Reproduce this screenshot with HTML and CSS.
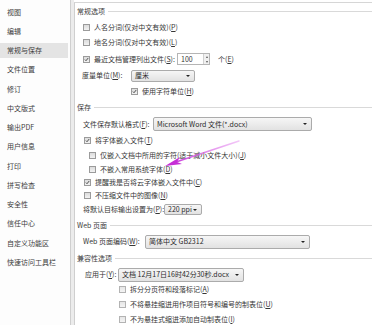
FILE: index.html
```html
<!DOCTYPE html>
<html lang="zh-CN">
<head>
<meta charset="utf-8">
<title>选项</title>
<link rel="stylesheet" href="styles.css">
</head>
<body>
<div class="page">
  <ul class="nav">
    <li>视图</li>
    <li>编辑</li>
    <li class="sel">常规与保存</li>
    <li>文件位置</li>
    <li>修订</li>
    <li>中文版式</li>
    <li>输出PDF</li>
    <li>用户信息</li>
    <li>打印</li>
    <li>拼写检查</li>
    <li>安全性</li>
    <li>信任中心</li>
    <li>自定义功能区</li>
    <li>快速访问工具栏</li>
  </ul>
  <div class="gutter"></div>
  <div class="content">
    <div class="grp g1"><span>常规选项</span><i class="rule"></i></div>
    <div class="row h15 p8"><span class="cb"></span><span>人名分词(仅对中文有效)(<u>P</u>)</span></div>
    <div class="row h16 p8"><span class="cb"></span><span>地名分词(仅对中文有效)(<u>L</u>)</span></div>
    <div class="row h17 p8"><span class="cb on"><svg viewBox="0 0 7 7"><path d="M1.3 3.6 L2.8 5.2 L5.8 1.5" /></svg></span><span class="w-recent">最近文档管理列出文件(<u>S</u>):</span>
      <span class="spin"><span class="spin-val">100</span><span class="spin-btn"><b class="up"></b><b class="dn"></b></span></span><span class="unit">个(<u>E</u>)</span></div>
    <div class="row h16 p7"><span class="w-measure">度量单位(<u>M</u>):</span><span class="sel-box s-cm"><span class="sel-text">厘米</span><b class="tri"></b></span></div>
    <div class="row h16 p57"><span class="cb on"><svg viewBox="0 0 7 7"><path d="M1.3 3.6 L2.8 5.2 L5.8 1.5" /></svg></span><span>使用字符单位(<u>H</u>)</span></div>

    <div class="grp g2"><span>保存</span><i class="rule"></i></div>
    <div class="row h17 p8"><span class="w-format">文件保存默认格式(<u>F</u>):</span><span class="sel-box s-fmt"><span class="sel-text">Microsoft Word 文件(*.docx)</span><b class="tri"></b></span></div>
    <div class="row h16 p9"><span class="cb on"><svg viewBox="0 0 7 7"><path d="M1.3 3.6 L2.8 5.2 L5.8 1.5" /></svg></span><span>将字体嵌入文件(<u>T</u>)</span></div>
    <div class="row h14 p14"><span class="cb"></span><span>仅嵌入文档中所用的字符(适于减小文件大小)(<u>J</u>)</span></div>
    <div class="row h14 p14"><span class="cb"></span><span>不嵌入常用系统字体(<u>D</u>)</span></div>
    <div class="row h13 p9"><span class="cb on"><svg viewBox="0 0 7 7"><path d="M1.3 3.6 L2.8 5.2 L5.8 1.5" /></svg></span><span>提醒我是否将云字体嵌入文件中(<u>C</u>)</span></div>
    <div class="row h13 p9"><span class="cb"></span><span>不压缩文件中的图像(<u>N</u>)</span></div>
    <div class="row h15 p8"><span class="w-ppi">将默认目标输出设置为(<u>P</u>):</span><span class="sel-box s-ppi"><span class="sel-text">220 ppi</span><b class="tri"></b></span></div>

    <div class="grp g3"><span>Web 页面</span><i class="rule"></i></div>
    <div class="row h15 p8"><span class="w-web">Web 页面编码(<u>W</u>):</span><span class="sel-box s-web"><span class="sel-text">简体中文 GB2312</span><b class="tri"></b></span></div>

    <div class="grp g4"><span>兼容性选项</span><i class="rule"></i></div>
    <div class="row h15 p10"><span class="w-apply">应用于(<u>Y</u>):</span><span class="sel-box s-doc"><span class="sel-text">文档 12月17日16时42分30秒.docx</span><b class="tri"></b></span></div>
    <div class="row h15 p44"><span class="cb dim"></span><span>拆分分页符和段落标记(<u>A</u>)</span></div>
    <div class="row h15 p44"><span class="cb dim"></span><span>不将悬挂缩进用作项目符号和编号的制表位(<u>U</u>)</span></div>
    <div class="row h15 p44"><span class="cb dim"></span><span>不为悬挂式缩进添加自动制表位(<u>I</u>)</span></div>
  </div>
  <svg class="arrow" width="372" height="325" viewBox="0 0 372 325">
    <defs>
      <linearGradient id="ag" x1="238" y1="142" x2="170" y2="164" gradientUnits="userSpaceOnUse">
        <stop offset="0" stop-color="#e58cf0" stop-opacity="0.5"/>
        <stop offset="1" stop-color="#c62fd8"/>
      </linearGradient>
    </defs>
    <path d="M239 141 L176 162" stroke="url(#ag)" stroke-width="1.4" fill="none" stroke-linecap="round"/>
    <path d="M165 166 L180 157 L177 162 L182 164 Z" fill="#c52ed6"/>
  </svg>
</div>
</body>
</html>
```

FILE: styles.css
```css
* { box-sizing: border-box; }
html, body { margin: 0; padding: 0; }
body {
  width: 372px;
  height: 325px;
  overflow: hidden;
  background: #ffffff;
  font-family: "Noto Sans CJK SC", "Noto Sans", sans-serif;
  font-size: 7px;
  color: #363636;
}
.page {
  position: relative;
  display: flex;
  width: 372px;
  height: 325px;
}
.nav {
  list-style: none;
  margin: 0;
  padding: 4.5px 0 0 0;
  width: 71px;
  height: 325px;
  background: #fdfdfd;
  border-right: 1px solid #cfcfcf;
}
.nav li {
  height: 15px;
  margin: 0 2px 4.25px 0;
  padding-left: 7px;
  display: flex;
  align-items: center;
  line-height: 1;
  color: #3c3c3c;
}
.nav li.sel { background: #e4e4e4; }
.gutter {
  width: 3px;
  height: 325px;
  background: #ececec;
}
.content {
  flex: 1;
  height: 325px;
  margin-top: 2px;
  border-top: 1px solid #d6d6d6;
  border-left: 1px solid #cfcfcf;
  padding-left: 2px;
  display: flex;
  flex-direction: column;
}
.grp {
  display: flex;
  align-items: center;
  line-height: 1;
  color: #3c3c3c;
}
.grp .rule {
  flex: 1;
  height: 1px;
  background: #d9d9d9;
  margin-left: 3px;
}
.g1 { height: 16px; margin-top: 1px; }
.g2 { height: 16px; }
.g3 { height: 17px; }
.g4 { height: 18px; }
.row {
  display: flex;
  align-items: center;
  line-height: 1;
  white-space: nowrap;
}
.h13 { height: 13px; }
.h14 { height: 14px; }
.h15 { height: 15px; }
.h16 { height: 16px; }
.h17 { height: 17px; }
.p7 { padding-left: 5px; }
.p8 { padding-left: 6px; }
.p9 { padding-left: 7px; }
.p10 { padding-left: 8px; }
.p14 { padding-left: 12px; }
.p44 { padding-left: 42px; }
.p57 { padding-left: 54px; }
u { text-decoration: underline; text-underline-offset: 1px; }

.cb {
  width: 7px;
  height: 7px;
  border: 1px solid #9b9b9b;
  background: linear-gradient(#dcdcdc, #f2f2f2);
  margin-right: 4px;
  flex: none;
  display: inline-flex;
}
.cb svg { width: 5px; height: 5px; }
.cb svg path { stroke: #333; stroke-width: 1.2; fill: none; }
.cb.dim { border-color: #b3b3b3; background: linear-gradient(#e6e6e6, #f4f4f4); }

.w-recent { width: 83px; }
.w-measure { width: 49px; }
.w-format { width: 70px; }
.w-ppi { width: 81px; }
.w-web { width: 62px; }
.w-apply { width: 33px; }

.spin {
  width: 33px;
  height: 12px;
  border: 1px solid #b5b5b5;
  background: #fff;
  display: flex;
  align-items: center;
  padding-left: 3px;
}
.spin-val { flex: 1; }
.spin-btn {
  width: 6px;
  height: 10px;
  display: flex;
  flex-direction: column;
  align-items: center;
  justify-content: space-around;
  background: #f0f0f0;
  border-left: 1px solid #d0d0d0;
}
.spin-btn b { width: 0; height: 0; border-left: 1.5px solid transparent; border-right: 1.5px solid transparent; }
.spin-btn .up { border-bottom: 2px solid #555; }
.spin-btn .dn { border-top: 2px solid #555; }
.unit { margin-left: 8px; }

.sel-box {
  display: flex;
  align-items: center;
  border: 1px solid #ababab;
  border-radius: 2px;
  background: linear-gradient(#f6f6f6, #e2e2e2);
  padding: 0 4px 0 3px;
  color: #2a2a2a;
}
.sel-text { flex: 1; white-space: nowrap; line-height: 1; }
.tri {
  width: 0; height: 0;
  border-left: 2px solid transparent;
  border-right: 2px solid transparent;
  border-top: 2.5px solid #222;
  flex: none;
}
.s-cm { width: 64px; height: 12px; }
.s-fmt { width: 159px; height: 14px; }
.s-ppi { width: 38px; height: 11px; }
.s-web { width: 165px; height: 14px; }
.s-doc { width: 126px; height: 14px; }

.arrow {
  position: absolute;
  left: 0;
  top: 0;
  pointer-events: none;
}
```
